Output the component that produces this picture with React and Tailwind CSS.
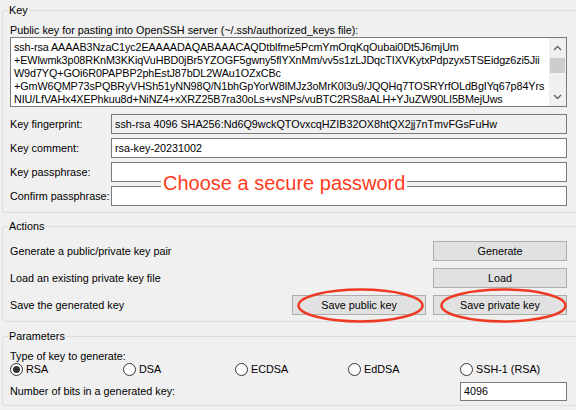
import React from "react";

const keyLines = [
  "ssh-rsa AAAAB3NzaC1yc2EAAAADAQABAAACAQDtblfme5PcmYmOrqKqOubai0Dt5J6mjUm",
  "+EWlwmk3p08RKnM3KKiqVuHBD0jBr5YZOGF5gwny5flYXnMm/vv5s1zLJDqcTIXVKytxPdpzyx5TSEidgz6zi5Jii",
  "W9d7YQ+GOi6R0PAPBP2phEstJ87bDL2WAu1OZxCBc",
  "+GmW6QMP73sPQBRyVHSh51yNN98Q/N1bhGpYorW8lMJz3oMrK0l3u9/JQQHq7TOSRYrfOLdBgIYq67p84Yrs",
  "NIU/LfVAHx4XEPhkuu8d+NiNZ4+xXRZ25B7ra30oLs+vsNPs/vuBTC2RS8aALH+YJuZW90LI5BMejUws",
];

const Field = ({ label, value, readOnly, className = "" }) => (
  <div className={`flex h-[20px] items-center ${className}`}>
    <span className="w-[101px] whitespace-nowrap">{label}</span>
    <div
      className={`flex h-full w-[456px] items-center border border-[#7a7a7a] pl-[3px] ${
        readOnly ? "bg-[#f0f0f0]" : "bg-white"
      }`}
    >
      {value}
    </div>
  </div>
);

const Button = ({ children }) => (
  <div className="flex h-[20px] w-[134px] items-center justify-center border border-[#adadad] bg-[#e1e1e1]">
    {children}
  </div>
);

const Radio = ({ label, checked }) => (
  <div className="flex items-center gap-[3px]">
    <span className="flex h-[13px] w-[13px] items-center justify-center rounded-full border border-[#333] bg-white">
      {checked && <span className="h-[7px] w-[7px] rounded-full bg-[#333]" />}
    </span>
    <span>{label}</span>
  </div>
);

const Group = ({ title, className = "", children }) => (
  <fieldset className={`w-[590px] rounded-[3px] border border-[#dcdcdc] pl-[7px] ${className}`}>
    <legend className="-ml-[2px] px-[1px] leading-[13px]">{title}</legend>
    {children}
  </fieldset>
);

const Chevron = ({ down }) => (
  <svg width="9" height="6" viewBox="0 0 9 6" className={down ? "rotate-180" : ""}>
    <path d="M1 5 L4.5 1.5 L8 5" fill="none" stroke="#606060" strokeWidth="1.3" />
  </svg>
);

export default function App() {
  return (
    <div className="relative h-[410px] w-[576px] overflow-hidden bg-[#f0f0f0] pl-[2px] font-['Liberation_Sans',Arial,sans-serif] text-[10.8px] leading-[13px] text-black">
      <Group title="Key" className="mt-[4px] pb-[6px]">
        <div className="mt-[7px]">Public key for pasting into OpenSSH server (~/.ssh/authorized_keys file):</div>
        <div className="flex h-[70px] w-[557px] border border-[#7a7a7a] bg-white">
          <div className="flex-1 overflow-hidden whitespace-pre pl-[3px] pt-[3px] tracking-[-0.1px]">
            {keyLines.map((l) => (
              <div key={l}>{l}</div>
            ))}
          </div>
          <div className="flex w-[17px] flex-col items-center bg-[#f0f0f0]">
            <div className="flex h-[20px] items-center">
              <Chevron />
            </div>
            <div className="h-[15px] w-[15px] bg-[#cdcdcd]" />
            <div className="flex-1" />
            <div className="flex h-[18px] items-center">
              <Chevron down />
            </div>
          </div>
        </div>
        <div className="mt-[7px] flex flex-col gap-[4px]">
          <Field label="Key fingerprint:" readOnly value="ssh-rsa 4096 SHA256:Nd6Q9wckQTOvxcqHZIB32OX8htQX2jj7nTmvFGsFuHw" />
          <Field label="Key comment:" value="rsa-key-20231002" />
          <Field label="Key passphrase:" value="" />
          <Field label="Confirm passphrase:" value="" />
        </div>
      </Group>

      <Group title="Actions" className="mt-[7px] pb-[6px]">
        <div className="w-[557px]">
          <div className="mt-[8px] flex items-center justify-between">
            <span>Generate a public/private key pair</span>
            <Button>Generate</Button>
          </div>
          <div className="mt-[7px] flex items-center justify-between">
            <span>Load an existing private key file</span>
            <Button>Load</Button>
          </div>
          <div className="mt-[7px] flex items-center">
            <span className="flex-1">Save the generated key</span>
            <div className="flex gap-[7px]">
              <Button>Save public key</Button>
              <Button>Save private key</Button>
            </div>
          </div>
        </div>
      </Group>

      <Group title="Parameters" className="mt-[8px] pb-[4px]">
        <div className="w-[557px]">
          <div className="mt-[7px]">Type of key to generate:</div>
          <div className="grid grid-cols-[113px_112px_113px_112px_107px]">
            <Radio label="RSA" checked />
            <Radio label="DSA" />
            <Radio label="ECDSA" />
            <Radio label="EdDSA" />
            <Radio label="SSH-1 (RSA)" />
          </div>
          <div className="mt-[6px] flex items-center justify-between">
            <span>Number of bits in a generated key:</span>
            <div className="flex h-[19px] w-[107px] items-center border border-[#7a7a7a] bg-white pl-[3px]">4096</div>
          </div>
        </div>
      </Group>

      <div className="absolute left-[161px] top-[173px] bg-white px-[2px] text-[20px] leading-[20px] text-[#ff3b22]">
        Choose a secure password
      </div>

      <svg className="pointer-events-none absolute left-0 top-0" width="576" height="410">
        <ellipse cx="360.5" cy="305.5" rx="62" ry="16" fill="none" stroke="#ee3a22" strokeWidth="2.5" />
        <ellipse cx="503.5" cy="305.5" rx="62" ry="16" fill="none" stroke="#ee3a22" strokeWidth="2.5" />
      </svg>
    </div>
  );
}
